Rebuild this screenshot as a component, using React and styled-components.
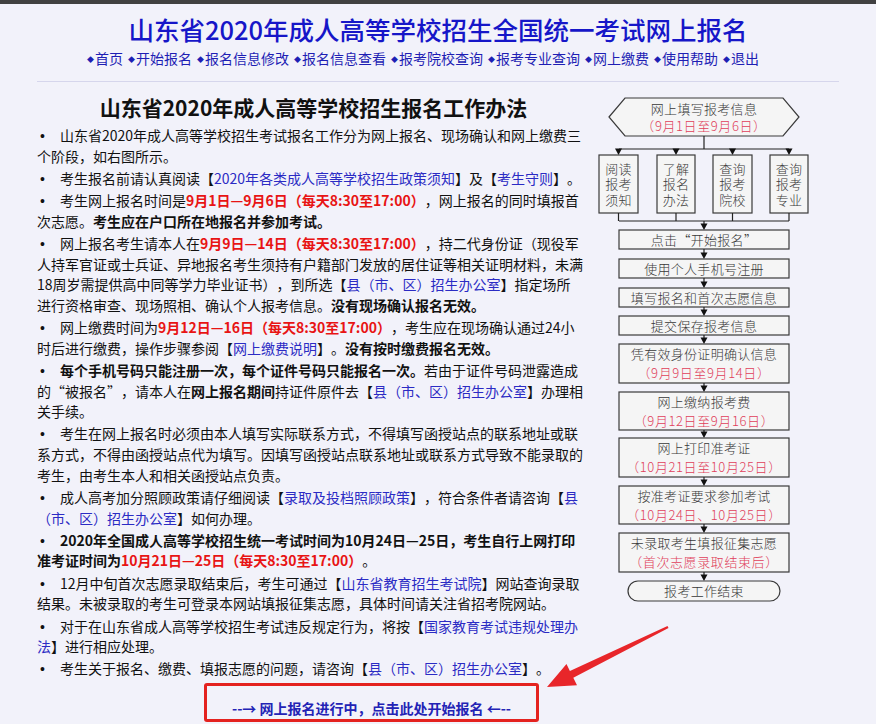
import React from 'react';
import styled, { createGlobalStyle } from 'styled-components';

const GlobalStyle = createGlobalStyle`
  html, body { margin: 0; padding: 0; background: #f2f2fa; overflow: hidden; }
  body {
    font-family: "Noto Sans CJK SC", "Noto Sans", sans-serif;
    color: #111;
    text-spacing-trim: space-all;
  }
`;

const TopBar = styled.div`
  height: 4px;
  background: #414141;
`;

const Page = styled.div`
  position: relative;
  width: 802px;
  margin: 0 auto;
`;

const Header = styled.header`
  text-align: center;
  padding: 9px 0 12px;
  border-bottom: 1px solid #d6d6ec;
`;

const Title = styled.h1`
  margin: 0;
  font-size: 25.5px;
  line-height: 32px;
  font-weight: 500;
  color: #1616c8;
`;

const Nav = styled.nav`
  margin-top: 3px;
  padding-right: 30px;
  font-size: 14px;
  line-height: 20px;
`;

const NavItem = styled.a`
  color: #1e1eb4;
  text-decoration: none;
  margin-right: 5px;
  &:last-child { margin-right: 0; }
`;

const Diamond = styled.span`
  font-size: 7px;
  margin-right: 1px;
  vertical-align: 2px;
`;

const Main = styled.main`
  display: flex;
  align-items: flex-start;
  margin-top: 7px;
`;

const Left = styled.section`
  width: 553px;
  flex: none;
`;

const Heading = styled.h2`
  margin: 4px 0 4px;
  font-size: 21px;
  line-height: 28px;
  font-weight: bold;
  text-align: center;
  color: #111;
`;

const List = styled.div`
  padding-right: 4px;
`;

const Item = styled.p`
  margin: 0 0 1.7px;
  font-size: 14px;
  line-height: 20.6px;
`;

const Bullet = styled.span`
  display: inline-block;
  width: 23px;
  padding-left: 3px;
  box-sizing: border-box;
  font-family: "Liberation Sans", Arial, sans-serif;
  line-height: 1;
`;

const Red = styled.span`
  color: #e81414;
  font-weight: bold;
`;

const B = styled.strong`
  font-weight: bold;
`;

const Link = styled.a`
  color: #2b2bc4;
  text-decoration: none;
`;

const Quote = styled.span`
  font-feature-settings: "fwid" 1;
`;

const NoBreak = styled.span`
  white-space: nowrap;
`;

const StartBox = styled.a`
  display: block;
  box-sizing: border-box;
  width: 335px;
  height: 39px;
  margin: 4px 0 0 167px;
  padding-top: 12px;
  border: 3px solid #e4221f;
  border-radius: 3px;
  text-align: center;
  font-size: 14px;
  line-height: 20px;
  font-weight: bold;
  color: #2323b5;
  text-decoration: none;
`;

const Chart = styled.svg`
  flex: none;
  margin-left: 5px;
  display: block;
`;

const ChartText = styled.text`
  font-family: "Noto Sans CJK SC", sans-serif;
  font-size: 13px;
  font-weight: 300;
  fill: ${(p) => (p.$red ? '#e0405a' : '#383838')};
  text-anchor: middle;
  dominant-baseline: central;
  letter-spacing: ${(p) => (p.$red ? '0.6px' : '0.3px')};
  font-feature-settings: ${(p) => (p.$fw ? '"fwid" 1' : 'normal')};
`;

const Shape = styled.polygon`
  fill: #f5f5f5;
  stroke: #3a3a3a;
  stroke-width: 1.2;
`;

const Box = styled.rect`
  fill: #f5f5f5;
  stroke: #3a3a3a;
  stroke-width: 1.2;
`;

const Wire = styled.polyline`
  fill: none;
  stroke: #222;
  stroke-width: 1.2;
`;

const Head = styled.polygon`
  fill: #111;
`;

const Pointer = styled.svg`
  position: absolute;
  left: 503px;
  top: 611px;
  pointer-events: none;
`;

const navItems = ['首页', '开始报名', '报名信息修改', '报名信息查看', '报考院校查询', '报考专业查询', '网上缴费', '使用帮助', '退出'];

const smallBoxes = [
  { x: 599, w: 39, lines: ['阅读', '报考', '须知'] },
  { x: 657, w: 38, lines: ['了解', '报名', '办法'] },
  { x: 713, w: 39, lines: ['查询', '报考', '院校'] },
  { x: 770, w: 38, lines: ['查询', '报考', '专业'] },
];

const steps = [
  { y: 229, h: 19, text: '点击“开始报名”', fw: true },
  { y: 258, h: 19, text: '使用个人手机号注册' },
  { y: 287, h: 19, text: '填写报名和首次志愿信息' },
  { y: 315, h: 19, text: '提交保存报考信息' },
  { y: 343, h: 39, text: '凭有效身份证明确认信息', sub: '（9月9日至9月14日）' },
  { y: 391, h: 38, text: '网上缴纳报考费', sub: '（9月12日至9月16日）' },
  { y: 437, h: 39, text: '网上打印准考证', sub: '（10月21日至10月25日）' },
  { y: 485, h: 38, text: '按准考证要求参加考试', sub: '（10月24日、10月25日）' },
  { y: 532, h: 39, text: '未录取考生填报征集志愿', sub: '（首次志愿录取结束后）' },
];

const Arrow = ({ x, y1, y2 }) => (
  <g>
    <Wire points={`${x},${y1} ${x},${y2 - 5}`} />
    <Head points={`${x - 3.5},${y2 - 6.5} ${x + 3.5},${y2 - 6.5} ${x},${y2}`} />
  </g>
);

const FlowChart = () => {
  const cx = 704;
  return (
    <Chart width="220" height="517" viewBox="595 88 220 517">
      <Shape points="609,116 625,97 783,97 799,116 783,135 625,135" />
      <ChartText x={cx} y={107}>网上填写报考信息</ChartText>
      <ChartText x={cx} y={124} $red>（9月1日至9月6日）</ChartText>

      <Wire points={`${cx},135 ${cx},148`} />
      <Wire points="619,148 789,148" />
      {smallBoxes.map((b) => (
        <Head
          key={`h${b.x}`}
          points={`${b.x + b.w / 2 - 3.5},147.5 ${b.x + b.w / 2 + 3.5},147.5 ${b.x + b.w / 2},154`}
        />
      ))}
      {smallBoxes.map((b) => (
        <g key={b.x}>
          <Box x={b.x} y={154} width={b.w} height={58} />
          {b.lines.map((l, i) => (
            <ChartText key={l + i} x={b.x + b.w / 2} y={167 + i * 15.5}>{l}</ChartText>
          ))}
          <Wire points={`${b.x + b.w / 2},212 ${b.x + b.w / 2},220`} />
        </g>
      ))}
      <Wire points="619,220 789,220" />
      <Arrow x={cx} y1={220} y2={229} />

      {steps.map((s, i) => (
        <g key={s.text}>
          {i > 0 && <Arrow x={cx} y1={steps[i - 1].y + steps[i - 1].h} y2={s.y} />}
          <Box x={619} y={s.y} width={170} height={s.h} />
          {s.sub ? (
            <>
              <ChartText x={cx} y={s.y + 9.5}>{s.text}</ChartText>
              <ChartText x={cx} y={s.y + 28} $red>{s.sub}</ChartText>
            </>
          ) : (
            <ChartText x={cx} y={s.y + 9} $fw={s.fw}>{s.text}</ChartText>
          )}
        </g>
      ))}
      <Arrow x={cx} y1={571} y2={580} />
      <Box x={628} y={580} width={152} height={20} rx={10} ry={10} />
      <ChartText x={cx} y={589.5}>报考工作结束</ChartText>
    </Chart>
  );
};

const Office = () => <Link>县（市、区）招生办公室</Link>;

export default function App() {
  return (
    <>
      <GlobalStyle />
      <TopBar />
      <Page>
        <Header>
          <Title>山东省2020年成人高等学校招生全国统一考试网上报名</Title>
          <Nav>
            {navItems.map((n) => (
              <NavItem key={n}><Diamond>◆</Diamond>{n}</NavItem>
            ))}
          </Nav>
        </Header>
        <Main>
          <Left>
            <Heading>山东省2020年成人高等学校招生报名工作办法</Heading>
            <List>
              <Item><Bullet>•</Bullet>山东省2020年成人高等学校招生考试报名工作分为网上报名、现场确认和网上缴费三个阶段，如右图所示。</Item>
              <Item><Bullet>•</Bullet>考生报名前请认真阅读【<Link>2020年各类成人高等学校招生政策须知</Link>】及【<Link>考生守则</Link>】。</Item>
              <Item><Bullet>•</Bullet>考生网上报名时间是<Red>9月1日—9月6日（每天8:30至17:00）</Red>，网上报名的同时填报首次志愿。<B>考生应在户口所在地报名并参加考试。</B></Item>
              <Item><Bullet>•</Bullet>网上报名考生请本人在<Red>9月9日—14日（每天8:30至17:00）</Red>，持二代身份证（现役军人持军官证或士兵证、异地报名考生须持有户籍部门发放的居住证等相关证明材料，未满18周岁需提供高中同等学力毕业证书），到所选【<Office />】指定场所<NoBreak>进行</NoBreak>资格审查、现场照相、确认个人报考信息。<B>没有现场确认报名无效。</B></Item>
              <Item><Bullet>•</Bullet>网上缴费时间为<Red>9月12日—16日（每天8:30至17:00）</Red>，考生应在现场确认通过24小时后进行缴费，操作步骤参阅【<Link>网上缴费说明</Link>】。<B>没有按时缴费报名无效。</B></Item>
              <Item><Bullet>•</Bullet><B>每个手机号码只能注册一次，每个证件号码只能报名一次。</B>若由于证件号码泄露造成的<Quote>“</Quote>被报名<Quote>”</Quote>，请本人在<B>网上报名期间</B>持证件原件去【<Office />】办理相关手续。</Item>
              <Item><Bullet>•</Bullet>考生在网上报名时必须由本人填写实际联系方式，不得填写函授站点的联系地址或联系方式，不得由函授站点代为填写。因填写函授站点联系地址或联系方式导致不能录取的考生，由考生本人和相关函授站点负责。</Item>
              <Item><Bullet>•</Bullet>成人高考加分照顾政策请仔细阅读【<Link>录取及投档照顾政策</Link>】，符合条件者请咨询【<Office />】如何办理。</Item>
              <Item><Bullet>•</Bullet><B>2020年全国成人高等学校招生统一考试时间为10月24日—25日，考生自行上网打印准考证时间为</B><Red>10月21日—25日（每天8:30至17:00）</Red>。</Item>
              <Item><Bullet>•</Bullet>12月中旬首次志愿录取结束后，考生可通过【<Link>山东省教育招生考试院</Link>】网站查询录取结果。未被录取的考生可登录本网站填报征集志愿，具体时间请关注省招考院网站。</Item>
              <Item><Bullet>•</Bullet>对于在山东省成人高等学校招生考试违反规定行为，将按【<Link>国家教育考试违规处理办法</Link>】进行相应处理。</Item>
              <Item><Bullet>•</Bullet>考生关于报名、缴费、填报志愿的问题，请咨询【<Office />】。</Item>
            </List>
            <StartBox>--→ 网上报名进行中，点击此处开始报名 ←--</StartBox>
          </Left>
          <FlowChart />
        </Main>
        <Pointer width="140" height="80" viewBox="540 615 140 80">
          <polygon
            points="547,687 566.5,664 569.9,671 667.5,625.9 668.5,628.1 573.3,677.7 577,685.2"
            fill="#e8262a"
          />
        </Pointer>
      </Page>
    </>
  );
}
